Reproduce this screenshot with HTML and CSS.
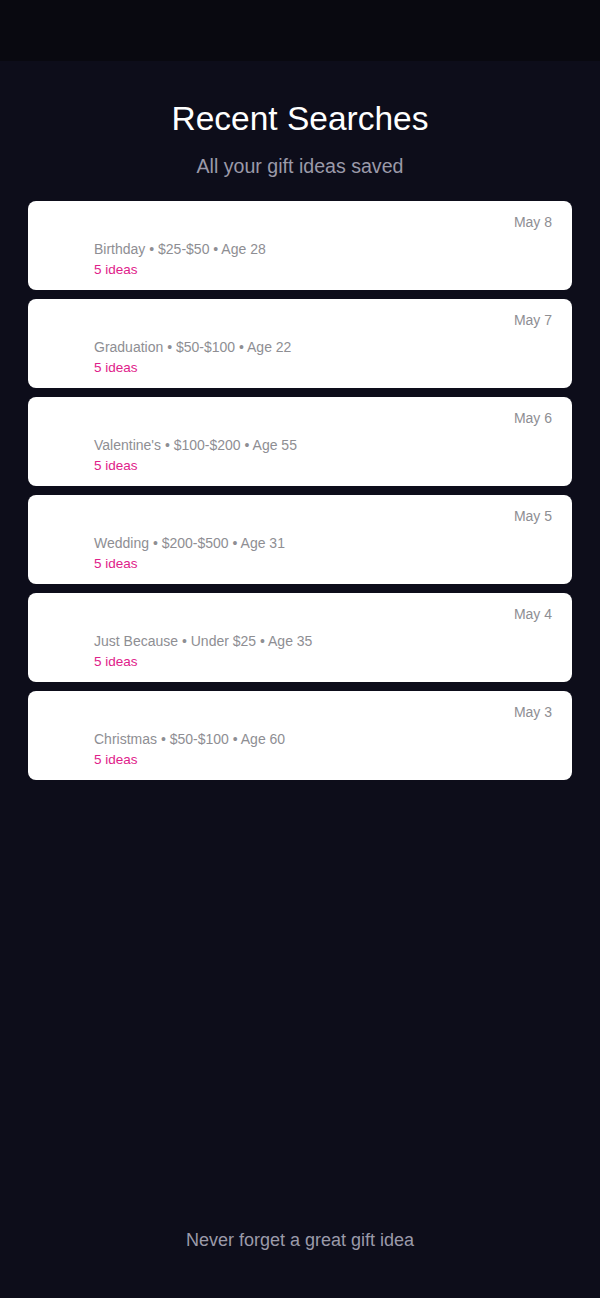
FILE: index.html
```html
<!DOCTYPE html>
<html lang="en">
<head>
    <meta charset="UTF-8">
    <meta name="viewport" content="width=device-width, initial-scale=1.0">
    <title>Recent Searches</title>
    <link rel="stylesheet" href="styles.css">
</head>
<body>
<div class="top-bar"></div>
<div class="page">
    <div class="header">
        <h1>Recent Searches</h1>
        <p class="subtitle">All your gift ideas saved</p>
    </div>

    <div class="list">
        <div class="card">
            <div class="date">May 8</div>
            <div class="meta">Birthday • $25-$50 • Age 28</div>
            <div class="count">5 ideas</div>
        </div>
        <div class="card">
            <div class="date">May 7</div>
            <div class="meta">Graduation • $50-$100 • Age 22</div>
            <div class="count">5 ideas</div>
        </div>
        <div class="card">
            <div class="date">May 6</div>
            <div class="meta">Valentine's • $100-$200 • Age 55</div>
            <div class="count">5 ideas</div>
        </div>
        <div class="card">
            <div class="date">May 5</div>
            <div class="meta">Wedding • $200-$500 • Age 31</div>
            <div class="count">5 ideas</div>
        </div>
        <div class="card">
            <div class="date">May 4</div>
            <div class="meta">Just Because • Under $25 • Age 35</div>
            <div class="count">5 ideas</div>
        </div>
        <div class="card">
            <div class="date">May 3</div>
            <div class="meta">Christmas • $50-$100 • Age 60</div>
            <div class="count">5 ideas</div>
        </div>
    </div>

    <p class="footer">Never forget a great gift idea</p>
</div>
</body>
</html>
```

FILE: styles.css
```css
body {
    margin: 0;
    background-color: #0d0d1a;
    font-family: "Liberation Sans", Arial, sans-serif;
    height: 1298px;
    display: flex;
    flex-direction: column;
}

.top-bar {
    height: 61px;
    background-color: #090910;
}

.page {
    flex: 1;
    display: flex;
    flex-direction: column;
    padding: 0 28px;
}

.header {
    text-align: center;
    padding-top: 38px;
}

h1 {
    color: #fff;
    font-size: 33.5px;
    font-weight: normal;
    margin: 0;
    line-height: 40px;
}

.subtitle {
    color: #9b9aa9;
    font-size: 19.6px;
    margin: 15px 0 0;
    line-height: 24px;
}

.list {
    display: flex;
    flex-direction: column;
    gap: 9px;
    margin-top: 23px;
}

.card {
    background-color: #fff;
    border-radius: 8px;
    height: 89px;
    box-sizing: border-box;
    padding: 11px 20px 0 66px;
}

.date {
    text-align: right;
    color: #8e8e93;
    font-size: 14px;
    line-height: 20px;
}

.meta {
    color: #8e8e93;
    font-size: 14px;
    line-height: 18px;
    margin-top: 8px;
}

.count {
    color: #e0218a;
    font-size: 13.5px;
    line-height: 18px;
    margin-top: 3px;
}

.footer {
    margin: auto 0 46px;
    text-align: center;
    color: #9b9aa9;
    font-size: 18px;
    line-height: 24px;
}
```
